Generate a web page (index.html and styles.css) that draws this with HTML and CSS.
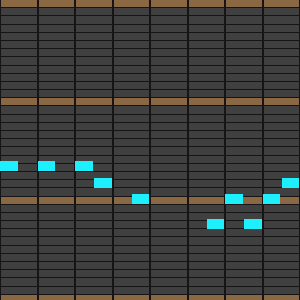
FILE: index.html
```html
<!DOCTYPE html>
<html lang="en">
<head>
    <meta charset="UTF-8">
    <meta name="viewport" content="width=device-width, initial-scale=1.0">
    <title>Piano Roll</title>
    <link rel="stylesheet" href="styles.css">
</head>
<body>
    <div class="roll">
        <div id="grid" class="grid"></div>
        <div id="notes" class="notes"></div>
    </div>
    <script src="script.js"></script>
</body>
</html>
```

FILE: styles.css
```css
* {
    box-sizing: border-box;
    margin: 0;
    padding: 0;
}

body {
    width: 300px;
    height: 300px;
    overflow: hidden;
    background-color: #151515;
    font-family: "Liberation Sans", Arial, sans-serif;
}

.roll {
    position: relative;
    width: 300px;
    height: 302px;
}

.grid {
    display: grid;
    grid-template-columns: repeat(8, 1fr);
    grid-template-rows: repeat(37, 1fr);
    column-gap: 2px;
    row-gap: 1px;
    padding: 0 1px;
    height: 100%;
    background-color: #151515;
}

.cell {
    background-color: #404040;
}

.cell.octave {
    background-color: #8b6844;
}

.notes {
    position: absolute;
    inset: 0;
}

.note {
    position: absolute;
    width: 17.5px;
    height: 10px;
    background-color: #1deffc;
}
```

FILE: script.js
```js
const grid = document.getElementById("grid");
const notesLayer = document.getElementById("notes");

const ROWS = 37;
const COLS = 8;
const ROW_H = 98 / 12;
const COL_W = 37.5;

for (let r = 0; r < ROWS; r++) {
    for (let c = 0; c < COLS; c++) {
        const cell = document.createElement("div");
        cell.className = r % 12 === 0 ? "cell octave" : "cell";
        grid.appendChild(cell);
    }
}

// [row, column, second half?]
const melody = [
    [20, 0, 0], [20, 1, 0], [20, 2, 0], [22, 2, 1],
    [24, 3, 1], [27, 5, 1], [24, 6, 0], [27, 6, 1],
    [24, 7, 0], [22, 7, 1]
];

melody.forEach(([row, col, half]) => {
    const note = document.createElement("div");
    note.className = "note";
    note.style.left = (col * COL_W + half * 19) + "px";
    note.style.top = (row * ROW_H - 2) + "px";
    notesLayer.appendChild(note);
});
```
